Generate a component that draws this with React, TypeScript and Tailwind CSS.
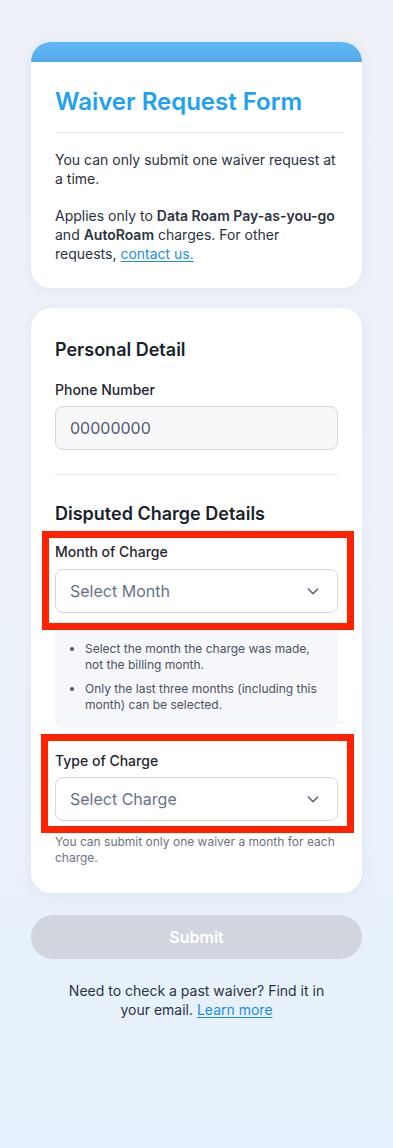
import { type FC } from 'react';

const font = { fontFamily: 'Inter, "Noto Sans", sans-serif' };

const Chevron: FC = () => (
  <svg width="16" height="16" viewBox="0 0 24 24" fill="none" stroke="#4b5670" strokeWidth="2" strokeLinecap="round" strokeLinejoin="round">
    <path d="M5 9l7 7 7-7" />
  </svg>
);

interface SelectProps {
  placeholder: string;
}

const SelectBox: FC<SelectProps> = ({ placeholder }) => (
  <div className="flex h-[44px] w-full items-center justify-between rounded-lg border border-[#d3d6e2] bg-white pl-[14px] pr-[16px]">
    <span className="text-[16px] text-[#68718a]">{placeholder}</span>
    <Chevron />
  </div>
);

export default function App() {
  return (
    <div
      className="min-h-[1148px] w-full bg-gradient-to-b from-[#eef0f7] via-[#edf2f9] to-[#e5f1fc] px-[31px] pt-[42px] pb-10"
      style={font}
    >
      {/* Intro card */}
      <div className="overflow-hidden rounded-[20px] bg-white shadow-[0_2px_12px_rgba(160,170,200,0.15)]">
        <div className="h-[20px] bg-gradient-to-b from-[#5cb9f6] to-[#57a9e6]" />
        <div className="pl-[24px] pr-[17px] pt-[24px] pb-[25px]">
          <h1 className="text-[24px] font-semibold leading-[32px] text-[#1da1f2]">Waiver Request Form</h1>
          <div className="mt-[14px] h-px bg-[#e6e8ee]" />
          <p className="mt-[17px] pr-[7px] text-[14px] leading-[19px] text-[#2b3242]">
            You can only submit one waiver request at a time.
          </p>
          <p className="mt-[18px] pr-[7px] text-[14px] leading-[19px] text-[#2b3242]">
            Applies only to <span className="font-semibold">Data Roam Pay-as-you-go</span> and{' '}
            <span className="font-semibold">AutoRoam</span> charges. For other requests,{' '}
            <a className="text-[#1a8fe0] underline underline-offset-2">contact us.</a>
          </p>
        </div>
      </div>

      {/* Form card */}
      <div className="mt-[20px] rounded-[20px] bg-white px-[24px] pt-[28px] pb-[27px] shadow-[0_2px_12px_rgba(160,170,200,0.15)]">
        <h2 className="text-[18px] font-semibold leading-[28px] text-[#1a1f2c]">Personal Detail</h2>
        <label className="mt-[16px] block text-[14px] font-medium leading-[20px] text-[#1f2533]">Phone Number</label>
        <div className="mt-[6px] flex h-[44px] items-center rounded-lg border border-[#d3d6e2] bg-[#f7f8fa] px-[14px]">
          <span className="text-[16px] text-[#525b72]">00000000</span>
        </div>
        <div className="mt-[24px] h-px bg-[#e6e8ee]" />
        <h2 className="mt-[25px] text-[18px] font-semibold leading-[28px] text-[#1a1f2c]">Disputed Charge Details</h2>

        <div className="mt-[3px] -ml-[13px] -mr-[16px] border-[7px] border-[#ff2200] pl-[6px] pr-[9px] pt-[4px] pb-[10px]">
          <label className="block text-[14px] font-medium leading-[20px] text-[#1f2533]">Month of Charge</label>
          <div className="mt-[7px]">
            <SelectBox placeholder="Select Month" />
          </div>
        </div>

        <div className="rounded-b-lg bg-[#f5f7fa] pl-[18px] pr-[10px] pt-[11px] pb-[15px]">
          <ul className="flex list-disc flex-col gap-[8px] pl-[12px] text-[12px] leading-[16px] text-[#4a5263]">
            <li>Select the month the charge was made, not the billing month.</li>
            <li>Only the last three months (including this month) can be selected.</li>
          </ul>
        </div>

        <div className="mt-[6px] -ml-[14px] -mr-[16px] border-[7px] border-[#ff2200] pl-[7px] pr-[9px] pt-[10px] pb-[5px]">
          <label className="block text-[14px] font-medium leading-[20px] text-[#1f2533]">Type of Charge</label>
          <div className="mt-[6px]">
            <SelectBox placeholder="Select Charge" />
          </div>
        </div>
        <p className="mt-px text-[12px] leading-[16px] text-[#6b7386]">
          You can submit only one waiver a month for each charge.
        </p>
      </div>

      {/* Submit */}
      <button className="mt-[22px] flex h-[44px] w-full items-center justify-center rounded-full bg-[#d1d5dd] text-[16px] font-semibold text-white">
        Submit
      </button>

      <p className="mx-auto mt-[22px] max-w-[280px] text-center text-[14px] leading-[19px] text-[#2b3242]">
        Need to check a past waiver? Find it in your email.{' '}
        <a className="text-[#1a8fe0] underline underline-offset-2">Learn more</a>
      </p>
    </div>
  );
}
